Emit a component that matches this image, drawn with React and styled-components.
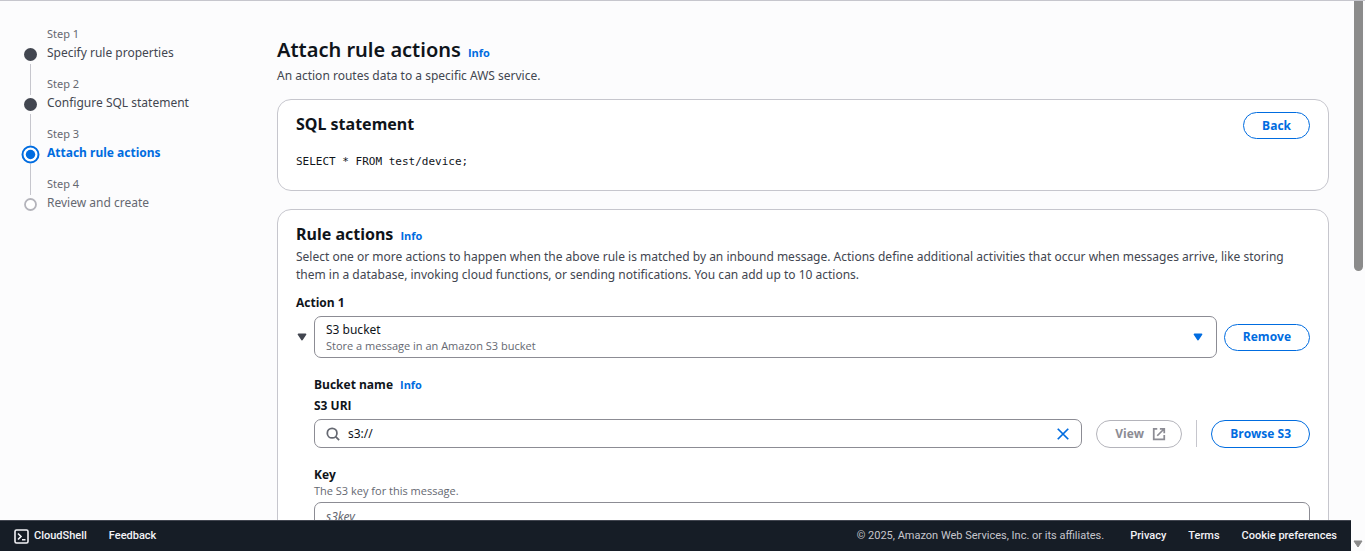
import React, { useState } from 'react';
import styled, { createGlobalStyle, css } from 'styled-components';

const GlobalStyle = createGlobalStyle`
  * { box-sizing: border-box; }
  body { margin: 0; background: #fcfcfd; }
  body, button, input, select {
    font-family: 'Noto Sans', 'Open Sans', sans-serif;
  }
  body { font-size: 12px; line-height: 18px; color: #0f141a; }
  h1, h2, p, ol { margin: 0; padding: 0; }
  svg { flex: none; }
`;

const compactFont = css`
  font-family: 'Open Sans', 'Noto Sans', sans-serif;
`;

const Shell = styled.div`
  display: grid;
  grid-template-columns: minmax(0, 1fr) 14px;
  height: 100vh;
  border-top: 1px solid #c6c6cd;
  overflow: hidden;
`;

const Page = styled.div`
  display: flex;
  flex-direction: column;
  min-height: 0;
`;

const Body = styled.div`
  flex: 1;
  min-height: 0;
  overflow: hidden;
  display: grid;
  grid-template-columns: 253px minmax(0, 1fr);
  padding: 24px 22px 0 24px;
`;

const Steps = styled.ol`
  list-style: none;
`;

const Step = styled.li`
  display: grid;
  grid-template-columns: 13px minmax(0, 1fr);
  column-gap: 10px;
  height: 50px;
`;

const Rail = styled.div`
  display: flex;
  flex-direction: column;
  align-items: center;
  padding-top: 20px;
  height: 70px;
`;

const Connector = styled.span`
  width: 1px;
  flex: 1;
  background: #c6c6cd;
`;

const StepText = styled.div`
  color: ${(p) => (p.$state === 'done' ? '#424650' : '#656871')};
`;

const StepNumber = styled.div`
  font-size: 11px;
  line-height: 18px;
  color: #656871;
`;

const StepName = styled.div`
  font-size: 12px;
  line-height: 20px;
  ${(p) => p.$state === 'current' && css`
    color: #006ce0;
    font-weight: 700;
  `}
`;

const Main = styled.main`
  padding-top: 12px;
`;

const PageTitle = styled.h1`
  font-size: 20px;
  line-height: 26px;
  font-weight: 600;
`;

const SectionTitle = styled.h2`
  font-size: 16px;
  line-height: 24px;
  font-weight: 700;
`;

const TitleRow = styled.div`
  display: flex;
  align-items: baseline;
  gap: 7px;
`;

const Info = styled.a`
  ${compactFont}
  font-size: 11px;
  line-height: 18px;
  font-weight: 700;
  color: #006ce0;
  text-decoration: none;
`;

const Description = styled.p`
  color: #424650;
  margin-top: ${(p) => (p.$page ? '4px' : '2px')};
`;

const Card = styled.section`
  margin-top: ${(p) => (p.$first ? '14px' : '18px')};
  padding: ${(p) => (p.$first ? '12px 18px 19px' : '12px 18px 20px')};
  background: #fff;
  border: 1px solid #c6c6cd;
  border-radius: 14px;
`;

const CardHeader = styled.div`
  display: flex;
  justify-content: space-between;
  align-items: flex-start;
`;

const Code = styled.code`
  display: block;
  margin-top: 14px;
  font-family: 'DejaVu Sans Mono', 'Liberation Mono', monospace;
  font-size: 11px;
  line-height: 18px;
`;

const PillButton = styled.button`
  ${compactFont}
  flex: none;
  display: inline-flex;
  align-items: center;
  justify-content: center;
  gap: 8px;
  height: ${(p) => (p.$tall ? '28px' : '27px')};
  padding: 0 ${(p) => (p.$icon ? '15px' : '18px')} 0 18px;
  border: 1px solid #006ce0;
  border-radius: 14px;
  background: #fff;
  color: #006ce0;
  font-size: 12px;
  line-height: 18px;
  font-weight: 700;
  &:disabled {
    border-color: #b4b4bb;
    color: #8c8c94;
  }
`;

const Label = styled.label`
  ${compactFont}
  display: block;
  font-weight: 700;
  line-height: 18px;
  ${(p) => p.$spaced && css`margin-top: 10px;`}
`;

const ActionRow = styled.div`
  display: grid;
  grid-template-columns: 11px minmax(0, 1fr) auto;
  align-items: center;
  column-gap: 7px;
  margin-top: 4px;
`;

const IconButton = styled.button`
  display: flex;
  align-items: center;
  justify-content: center;
  padding: 0;
  border: 0;
  background: none;
  color: ${(p) => (p.$accent ? '#006ce0' : '#424650')};
`;

const SelectBox = styled.div`
  display: grid;
  grid-template-columns: minmax(0, 1fr) 14px;
  align-items: center;
  height: 42px;
  padding: 0 11px;
  border: 1px solid #8c8c94;
  border-radius: 7px;
  color: #006ce0;
`;

const Select = styled.select`
  display: block;
  width: 100%;
  height: 18px;
  padding: 0;
  border: 0;
  background: none;
  appearance: none;
  color: #0f141a;
  font-size: 12px;
  line-height: 18px;
`;

const Hint = styled.div`
  ${compactFont}
  font-size: 11px;
  line-height: 14px;
  color: #656871;
`;

const Fields = styled.div`
  margin: 18px 0 0 18px;
`;

const UriLabel = styled(Label)`
  margin-top: 3px;
`;

const UriRow = styled.div`
  display: flex;
  align-items: center;
  gap: 14px;
  margin-top: 4px;
`;

const InputBox = styled.div`
  flex: 1;
  min-width: 0;
  display: flex;
  align-items: center;
  gap: 8px;
  height: 29px;
  padding: 0 11px;
  border: 1px solid #8c8c94;
  border-radius: 7px;
  color: #656871;
`;

const TextInput = styled.input`
  flex: 1;
  min-width: 0;
  padding: 0;
  border: 0;
  outline: 0;
  background: none;
  color: #0f141a;
  font-size: 12px;
  line-height: 18px;
  &::placeholder {
    color: #656871;
    font-style: italic;
    opacity: 1;
  }
`;

const Divider = styled.span`
  width: 1px;
  height: 27px;
  background: #c6c6cd;
`;

const KeyField = styled.div`
  margin-top: 18px;
`;

const KeyBox = styled(InputBox)`
  margin-top: 4px;
`;

const Footer = styled.footer`
  flex: none;
  display: flex;
  align-items: center;
  justify-content: space-between;
  height: 31px;
  padding: 0 14px;
  border-top: 1px solid #424650;
  background: #161d26;
  color: #c6c6cd;
  font-family: Roboto, 'Noto Sans', sans-serif;
  font-size: 11px;
`;

const FooterGroup = styled.div`
  display: flex;
  align-items: center;
  gap: 22px;
`;

const Copyright = styled.span`
  margin-right: 4px;
`;

const footerItem = css`
  display: inline-flex;
  align-items: center;
  gap: 5px;
  padding: 0;
  border: 0;
  background: none;
  color: #f3f3f7;
  font-family: Roboto, 'Noto Sans', sans-serif;
  font-size: 11px;
  line-height: 18px;
  font-weight: 500;
  text-decoration: none;
`;
const FooterButton = styled.button`${footerItem}`;
const FooterLink = styled.a`${footerItem}`;

const ScrollTrack = styled.div`
  display: flex;
  flex-direction: column;
  align-items: center;
  justify-content: space-between;
  background: #fcfcfd;
  color: #8b8b8b;
`;

const ScrollThumb = styled.div`
  width: 9px;
  height: 49%;
  border-radius: 0 0 5px 5px;
  background: #8b8b8b;
`;

const Icon = ({ size = 14, children }) => (
  <svg width={size} height={size} viewBox="0 0 16 16" fill="none" stroke="currentColor" strokeWidth="2" aria-hidden="true">
    {children}
  </svg>
);

const Caret = () => (
  <Icon>
    <path d="M4 5h8l-4 6-4-6z" fill="currentColor" strokeLinejoin="round" />
  </Icon>
);

const steps = [
  { name: 'Specify rule properties', state: 'done' },
  { name: 'Configure SQL statement', state: 'done' },
  { name: 'Attach rule actions', state: 'current' },
  { name: 'Review and create', state: 'next' },
];

const StepMarker = ({ state }) => (
  <svg width="19" height="19" viewBox="0 0 19 19" aria-hidden="true">
    {state === 'done' && <circle cx="9.5" cy="9.5" r="6.5" fill="#424650" />}
    {state === 'current' && (
      <>
        <circle cx="9.5" cy="9.5" r="8" fill="#fff" stroke="#006ce0" strokeWidth="2" />
        <circle cx="9.5" cy="9.5" r="4.7" fill="#006ce0" />
      </>
    )}
    {state === 'next' && <circle cx="9.5" cy="9.5" r="5.5" fill="#fff" stroke="#b4b4bb" strokeWidth="1.8" />}
  </svg>
);

export default function App() {
  const [uri, setUri] = useState('s3://');
  return (
    <>
      <GlobalStyle />
      <Shell>
        <Page>
          <Body>
            <Steps>
              {steps.map((s, i) => (
                <Step key={s.name}>
                  <Rail>
                    <StepMarker state={s.state} />
                    {i < steps.length - 1 && <Connector />}
                  </Rail>
                  <StepText $state={s.state}>
                    <StepNumber>Step {i + 1}</StepNumber>
                    <StepName $state={s.state}>{s.name}</StepName>
                  </StepText>
                </Step>
              ))}
            </Steps>
            <Main>
              <TitleRow>
                <PageTitle>Attach rule actions</PageTitle>
                <Info href="#info">Info</Info>
              </TitleRow>
              <Description $page>An action routes data to a specific AWS service.</Description>

              <Card $first>
                <CardHeader>
                  <SectionTitle>SQL statement</SectionTitle>
                  <PillButton type="button">Back</PillButton>
                </CardHeader>
                <Code>SELECT * FROM test/device;</Code>
              </Card>

              <Card>
                <TitleRow>
                  <SectionTitle>Rule actions</SectionTitle>
                  <Info href="#info">Info</Info>
                </TitleRow>
                <Description>
                  Select one or more actions to happen when the above rule is matched by an inbound message. Actions define
                  additional activities that occur when messages arrive, like storing them in a database, invoking cloud
                  functions, or sending notifications. You can add up to 10 actions.
                </Description>
                <Label $spaced htmlFor="action">Action 1</Label>
                <ActionRow>
                  <IconButton type="button" aria-label="Collapse action"><Caret /></IconButton>
                  <SelectBox>
                    <div>
                      <Select id="action" defaultValue="s3">
                        <option value="s3">S3 bucket</option>
                      </Select>
                      <Hint>Store a message in an Amazon S3 bucket</Hint>
                    </div>
                    <Caret />
                  </SelectBox>
                  <PillButton type="button">Remove</PillButton>
                </ActionRow>
                <Fields>
                  <TitleRow>
                    <Label as="div">Bucket name</Label>
                    <Info href="#info">Info</Info>
                  </TitleRow>
                  <UriLabel htmlFor="uri">S3 URI</UriLabel>
                  <UriRow>
                    <InputBox>
                      <Icon>
                        <circle cx="7" cy="7" r="5.5" />
                        <path d="m11 11 4 4" />
                      </Icon>
                      <TextInput id="uri" value={uri} onChange={(e) => setUri(e.target.value)} />
                      <IconButton $accent type="button" aria-label="Clear" onClick={() => setUri('')}>
                        <Icon><path d="m2 2 12 12M14 2 2 14" /></Icon>
                      </IconButton>
                    </InputBox>
                    <PillButton $tall $icon type="button" disabled>
                      View
                      <Icon><path d="M9 2h5v5M6 10l8-8M14 9v5H2V2h4" /></Icon>
                    </PillButton>
                    <Divider />
                    <PillButton $tall type="button">Browse S3</PillButton>
                  </UriRow>
                  <KeyField>
                    <Label htmlFor="key">Key</Label>
                    <Hint>The S3 key for this message.</Hint>
                    <KeyBox>
                      <TextInput id="key" placeholder="s3key" />
                    </KeyBox>
                  </KeyField>
                </Fields>
              </Card>
            </Main>
          </Body>
          <Footer>
            <FooterGroup>
              <FooterButton type="button">
                <svg width="15" height="15" viewBox="0 0 15 15" fill="none" stroke="currentColor" strokeWidth="1.6" aria-hidden="true">
                  <rect x="1" y="1" width="13" height="13" rx="1.5" />
                  <path d="m4 4.5 3 3-3 3M8 10.7h3.5" />
                </svg>
                CloudShell
              </FooterButton>
              <FooterButton type="button">Feedback</FooterButton>
            </FooterGroup>
            <FooterGroup>
              <Copyright>© 2025, Amazon Web Services, Inc. or its affiliates.</Copyright>
              <FooterLink href="#privacy">Privacy</FooterLink>
              <FooterLink href="#terms">Terms</FooterLink>
              <FooterButton type="button">Cookie preferences</FooterButton>
            </FooterGroup>
          </Footer>
        </Page>
        <ScrollTrack aria-hidden="true">
          <ScrollThumb />
          <svg width="10" height="12" viewBox="0 0 10 12" fill="currentColor">
            <path d="M1 2h8L5 8z" stroke="currentColor" strokeLinejoin="round" />
          </svg>
        </ScrollTrack>
      </Shell>
    </>
  );
}
